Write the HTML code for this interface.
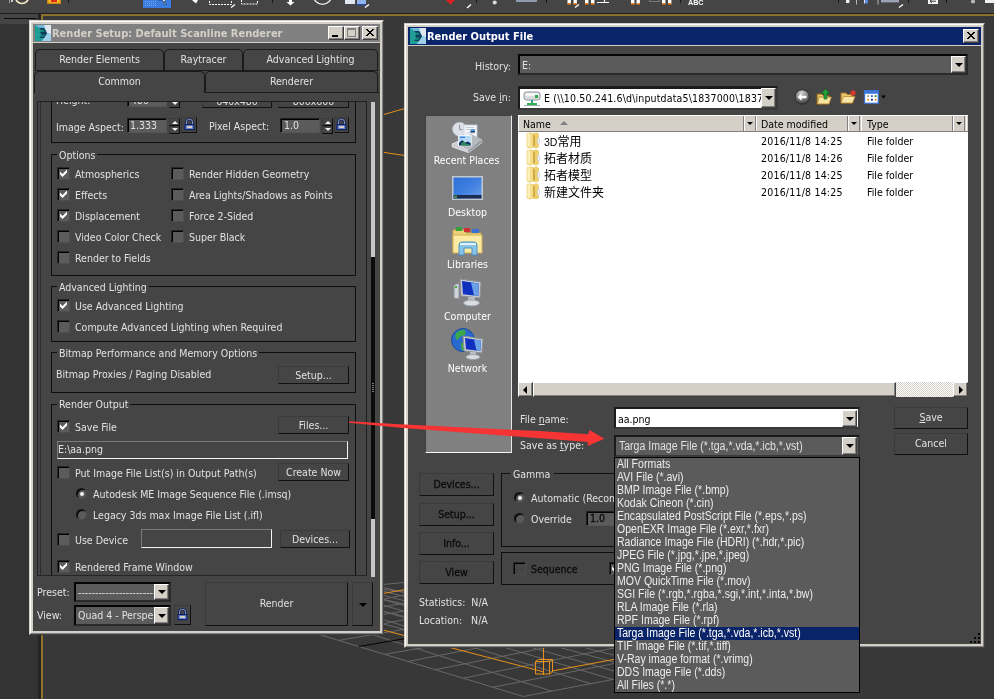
<!DOCTYPE html>
<html lang="en">
<head>
<meta charset="utf-8">
<title>Render Output File</title>
<style>
html,body{margin:0;padding:0;}
body{width:994px;height:699px;overflow:hidden;background:#383838;position:relative;
 font-family:"DejaVu Sans Condensed","Liberation Sans",sans-serif;font-size:10.5px;line-height:13px;color:#e1e1e1;}
.a{position:absolute;box-sizing:border-box;}
.t{position:absolute;white-space:nowrap;line-height:13px;height:13px;}
.dlg{position:absolute;box-sizing:border-box;background:#454545;}
/* classic window frame */
.frame{position:absolute;box-sizing:border-box;border:1px solid;border-color:#d4d0c8 #404040 #404040 #d4d0c8;}
.frame2{position:absolute;box-sizing:border-box;border:1px solid;border-color:#ffffff #808080 #808080 #ffffff;}
.frame3{position:absolute;box-sizing:border-box;border:2px solid #d4d0c8;}
.title{position:absolute;box-sizing:border-box;height:18px;font-weight:bold;font-size:11px;line-height:18px;white-space:nowrap;}
.tb{position:absolute;box-sizing:border-box;width:16px;height:14px;background:#d4d0c8;border:1px solid;border-color:#fff #404040 #404040 #fff;box-shadow:inset -1px -1px 0 #808080;}
.grp{position:absolute;box-sizing:border-box;border:1px solid #0e0e0e;}
.gl{position:absolute;white-space:nowrap;background:#454545;padding:0 2px 0 2px;line-height:13px;height:13px;}
.cb{position:absolute;box-sizing:border-box;width:13px;height:13px;background:#5b5b5b;border:1px solid;border-color:#262626 #4e4e4e #4e4e4e #262626;box-shadow:inset 1px 1px 0 #000;}
.cb svg{position:absolute;left:2px;top:1px;}
.rb{position:absolute;box-sizing:border-box;width:11px;height:11px;border-radius:50%;background:#5b5b5b;border:1px solid;border-color:#141414 #4c4c4c #4c4c4c #141414;box-shadow:inset 1px 1px 0 #000;}
.rb.on::after{content:"";position:absolute;left:3px;top:3px;width:4px;height:4px;border-radius:50%;background:#f0f0f0;}
.btn{position:absolute;box-sizing:border-box;border:1px solid;border-color:#3a3a3a #111 #111 #3a3a3a;background:#454545;text-align:center;white-space:nowrap;}
.fld{position:absolute;box-sizing:border-box;border:1px solid;border-color:#7a7a7a #f4f4f4 #f4f4f4 #7a7a7a;background:#454545;}
.sunk{position:absolute;box-sizing:border-box;border:1px solid;border-color:#1e1e1e #555 #555 #1e1e1e;box-shadow:inset 1px 1px 0 #000;}
.dd{position:absolute;box-sizing:border-box;width:15px;background:#d4d0c8;border:1px solid;border-color:#fff #404040 #404040 #fff;box-shadow:inset -1px -1px 0 #808080;}
.dd::after{content:"";position:absolute;left:3px;top:50%;margin-top:-2px;border:4px solid transparent;border-top-color:#000;border-bottom-width:0;}
.tab{position:absolute;box-sizing:border-box;border:1px solid #1b1b1b;border-bottom:none;border-radius:5px 5px 0 0;background:#454545;text-align:center;white-space:nowrap;}
.ms{font-family:"Liberation Sans",sans-serif;font-size:12.5px;transform:scaleX(.842);transform-origin:0 50%;}
.li{height:13px;line-height:13px;white-space:nowrap;padding-left:2px;color:#ececec;}
.li .ms{display:inline-block;}
.li.sel{background:#0a246a;color:#fff;}
.cj{font-family:"Liberation Sans","Noto Sans CJK SC",sans-serif;font-size:12px;}
.btn.dis,.dk{color:#0c0c0c;-webkit-text-stroke:.3px #0c0c0c;}
.sp{position:absolute;box-sizing:border-box;width:11px;height:8px;border:1px solid;border-color:#3a3a3a #0a0a0a #0a0a0a #3a3a3a;}
.sp i{position:absolute;left:2px;top:2px;border:3px solid transparent;width:0;height:0;}
.sp i.u{border-bottom-color:#f0f0f0;border-top-width:0;}
.sp i.d{border-top-color:#f0f0f0;border-bottom-width:0;top:1px;}
.dd.hl::after{left:4px;margin-top:-4px;border:4px solid transparent;border-right-color:#000;border-left-width:0;}
.dd.hr::after{left:5px;margin-top:-4px;border:4px solid transparent;border-left-color:#000;border-right-width:0;}
.cmb{position:absolute;box-sizing:border-box;border:2px solid;border-color:#050505 #2a2a2a #2a2a2a #050505;background:#5b5b5b;}
</style>
</head>
<body>
<div id="root" style="position:absolute;left:0;top:0;width:994px;height:699px;will-change:transform;">
<!-- ===== BACKGROUND: toolbar + viewport ===== -->
<div id="bg" class="a" style="left:0;top:0;width:994px;height:699px;">
 <div class="a" style="left:0;top:0;width:994px;height:13px;background:#454545;"></div>
 <div class="a" style="left:0;top:13px;width:994px;height:1px;background:#1e1e1e;"></div>
 <div class="a" style="left:0;top:14px;width:39px;height:10px;background:#454545;"></div>
 <div class="a" style="left:4px;top:18px;width:33px;height:1px;background:#0c0c0c;"></div>
 <div class="a" style="left:0;top:24px;width:39px;height:675px;background:#333333;"></div>
 <div class="a" style="left:38px;top:14px;width:3px;height:685px;background:repeating-conic-gradient(#141414 0 25%,#353535 0 50%) 0 0/2px 2px;"></div>
 <div class="a" style="left:41px;top:14px;width:953px;height:685px;border-top:2px solid #8c722b;border-left:2px solid #8c722b;"></div>
</div>
<svg id="toolbar" class="a" style="left:0;top:0" width="994" height="13" viewBox="0 0 994 13">
<rect x="9" y="0" width="1" height="3" fill="#9a9a9a"/><rect x="11" y="0" width="2" height="2" fill="#c8c8c8"/>
<circle cx="22" cy="-3" r="6.5" fill="none" stroke="#f4ecc8" stroke-width="1.6"/>
<rect x="48" y="-3" width="12" height="6" fill="#f0c030" stroke="#f09a10" stroke-width="1.6"/><rect x="51" y="0" width="6" height="2" fill="#e02a20"/>
<rect x="68" y="0" width="1" height="3" fill="#1a1a1a"/>
<rect x="143" y="0" width="28" height="8" fill="#3a7be0"/><path d="M145 1h1v1h-1zM147 1h1v1h-1zM149 1h1v1h-1zM151 1h1v1h-1zM153 1h1v1h-1zM155 1h1v1h-1zM145 3h1v1h-1zM147 3h1v1h-1zM149 3h1v1h-1zM151 3h1v1h-1zM153 3h1v1h-1zM155 3h1v1h-1zM145 5h1v1h-1zM147 5h1v1h-1zM149 5h1v1h-1zM151 5h1v1h-1zM153 5h1v1h-1zM155 5h1v1h-1z" fill="#7aa8f0"/>
<path d="M158 0L162 0L166.5 4L163.5 4L165.5 0" fill="#fff" stroke="#123" stroke-width=".6"/>
<path d="M192 0L196 3.5L198 0Z" fill="#fff"/>
<rect x="209.5" y="-4" width="22" height="8.5" fill="none" stroke="#fff" stroke-width="1" stroke-dasharray="2 1"/>
<path d="M231 7.5L235 4.5" stroke="#fff" stroke-width="1.4"/>
<rect x="241.5" y="-4" width="16" height="8" fill="none" stroke="#fff" stroke-width="1" stroke-dasharray="2 1"/>
<rect x="272" y="0" width="1" height="3" fill="#1a1a1a"/>
<path d="M289 0H292V2H294.5L290.5 5.5L286.5 2H289Z" fill="#fff"/>
<circle cx="322.5" cy="-5" r="9.3" fill="none" stroke="#f0f0f0" stroke-width="1.3"/>
<rect x="345" y="0" width="10" height="4" fill="#e2e8f2"/><rect x="357" y="0" width="9" height="4" fill="#8fb4ec"/><rect x="357" y="4" width="9" height="1.4" fill="#2a4aa0"/>
<path d="M365 7.5L369 4.5" stroke="#fff" stroke-width="1.4"/>
<path d="M446 0H455L450.5 4.5Z" fill="#e02020"/>
<path d="M467 8L471 4.5" stroke="#fff" stroke-width="1.4"/>
<rect x="476" y="0" width="1" height="3" fill="#1a1a1a"/>
<circle cx="494.7" cy="2.5" r="2.1" fill="#d8d8d8"/>
<rect x="516" y="0" width="21" height="2" fill="#8e9aae"/>
<rect x="546" y="0" width="1" height="3" fill="#1a1a1a"/>
<g fill="#fff"><rect x="567.5" y="0" width="3.4" height="4"/><rect x="573.5" y="0" width="3.4" height="4"/><rect x="585" y="0" width="3.4" height="4"/><rect x="591" y="0" width="3.4" height="4"/><rect x="631" y="0" width="3.4" height="4"/><rect x="636.5" y="0" width="3.4" height="4"/><rect x="662" y="0" width="3.4" height="4"/><rect x="668" y="0" width="3.4" height="4"/></g>
<g fill="#f08020"><rect x="567.5" y="3" width="3.4" height="1.6"/><rect x="573.5" y="3" width="3.4" height="1.6"/><rect x="585" y="3" width="3.4" height="1.6"/><rect x="591" y="3" width="3.4" height="1.6"/><rect x="631" y="3" width="3.4" height="1.6"/><rect x="636.5" y="3" width="3.4" height="1.6"/><rect x="662" y="3" width="3.4" height="1.6"/><rect x="668" y="3" width="3.4" height="1.6"/></g>
<path d="M575 7.5L579 4.5" stroke="#fff" stroke-width="1.4"/>
<path d="M597 2.5H609M604.5 0V2.5" stroke="#fff" stroke-width="1.2"/>
<rect x="649.5" y="-3" width="10" height="4.5" fill="none" stroke="#7a7a7a"/>
<rect x="680" y="0" width="1" height="3" fill="#1a1a1a"/>
<text x="688" y="5.2" font-family="Liberation Sans, sans-serif" font-size="7" font-weight="bold" fill="#fff" textLength="15.5" lengthAdjust="spacingAndGlyphs">ABC</text>
<rect x="838" y="0" width="1" height="3" fill="#1a1a1a"/>
<rect x="846" y="0" width="3.4" height="3" fill="#f0f0f0"/>
<rect x="856" y="0" width="1" height="4.5" fill="#b8b8b8"/>
<rect x="864" y="0" width="4" height="3.4" fill="#5a8be0"/><rect x="864" y="0" width="1" height="3.4" fill="#dfe8fa"/>
<rect x="877.5" y="0" width="1" height="4.5" fill="#b8b8b8"/>
<rect x="881" y="0" width="18" height="2.4" fill="#9aa4b6"/>
<path d="M899 7.5L903 4.5" stroke="#fff" stroke-width="1.4"/>
<rect x="908" y="0" width="1" height="3" fill="#1a1a1a"/>
<rect x="928" y="-2" width="10" height="6" fill="#f4f4f4"/><path d="M930 1.2H936M930 1.2L932 -.5M930 1.2L932 3" stroke="#222" stroke-width=".9" fill="none"/>
<rect x="946" y="0" width="1" height="3" fill="#1a1a1a"/>
<rect x="971" y="0" width="4" height="3.2" rx="1" fill="#b4b4b4"/>
<rect x="985" y="0" width="9" height="3" fill="#f0f0f0"/>
</svg>
<!--VP_START-->
<svg id="viewport" class="a" style="left:0;top:0" width="994" height="699" viewBox="0 0 994 699" stroke-width="1" shape-rendering="auto">
<line x1="209.4" y1="601.1" x2="523.3" y2="696.5" stroke="#686868"/>
<line x1="252.7" y1="597.0" x2="551.7" y2="691.1" stroke="#686868"/>
<line x1="296.7" y1="592.8" x2="590.8" y2="683.7" stroke="#686868"/>
<line x1="314.9" y1="591.1" x2="612.8" y2="679.5" stroke="#686868"/>
<line x1="328.7" y1="589.8" x2="631.3" y2="676.0" stroke="#686868"/>
<line x1="341.7" y1="588.5" x2="651.5" y2="672.2" stroke="#686868"/>
<line x1="353.1" y1="587.4" x2="667.4" y2="669.1" stroke="#686868"/>
<line x1="364.0" y1="586.4" x2="683.1" y2="666.2" stroke="#686868"/>
<line x1="374.5" y1="585.4" x2="698.7" y2="663.2" stroke="#686868"/>
<line x1="362.2" y1="586.6" x2="404.0" y2="592.0" stroke="#686868"/>
<line x1="337.8" y1="588.9" x2="404.0" y2="604.1" stroke="#686868"/>
<line x1="303.4" y1="592.2" x2="404.0" y2="616.3" stroke="#686868"/>
<line x1="274.0" y1="595.0" x2="404.0" y2="629.4" stroke="#686868"/>
<line x1="209.3" y1="601.0" x2="900.0" y2="535.4" stroke="#686868"/>
<line x1="276.9" y1="621.6" x2="900.0" y2="490.7" stroke="#686868"/>
<line x1="283.9" y1="623.7" x2="900.0" y2="519.0" stroke="#686868"/>
<line x1="300.1" y1="628.7" x2="900.0" y2="526.7" stroke="#686868"/>
<line x1="322.0" y1="635.3" x2="900.0" y2="525.5" stroke="#686868"/>
<line x1="338.7" y1="640.4" x2="900.0" y2="545.0" stroke="#686868"/>
<line x1="384.5" y1="654.3" x2="900.0" y2="566.7" stroke="#686868"/>
<line x1="408.0" y1="661.5" x2="900.0" y2="565.5" stroke="#686868"/>
<line x1="435.3" y1="669.7" x2="900.0" y2="576.8" stroke="#686868"/>
<line x1="463.1" y1="678.2" x2="900.0" y2="590.8" stroke="#686868"/>
<line x1="492.8" y1="687.2" x2="900.0" y2="607.8" stroke="#686868"/>
<line x1="523.2" y1="696.5" x2="900.0" y2="624.9" stroke="#686868"/>
<line x1="358.8" y1="646.5" x2="900.0" y2="554.5" stroke="#000"/>
<path d="M383 630L544 672M552 671L640 654.5M300 608L420 587M383.8 114.5L404 108.7M383.8 152.4L404 155.4" stroke="#e8901c" fill="none"/>
<path d="M535.5 661.5H549.5V674H535.5ZM538.5 659.5H552.5V672M535.5 661.5L538.5 659.5M549.5 661.5L552.5 659.5M549.5 674L552.5 672M543.5 647V675" stroke="#e8901c" fill="none"/>
</svg>
<div class="a" style="left:41px;top:635px;width:2px;height:64px;background:#8c722b;"></div>
<!--VP_END-->
<!--LEFTDLG_START-->
<!-- ===== LEFT DIALOG: Render Setup ===== -->
<div id="renderSetup" class="dlg" style="left:29px;top:20px;width:355px;height:615px;">
 <div class="frame" style="left:0;top:0;width:355px;height:615px;"></div>
 <div class="frame2" style="left:1px;top:1px;width:353px;height:613px;"></div>
 <div class="frame3" style="left:2px;top:2px;width:351px;height:611px;"></div>
</div>
<div class="title" style="left:33px;top:24px;width:347px;background:#808080;color:#d4d0c8;">
 <svg class="a" style="left:2px;top:1px" width="16" height="16" viewBox="0 0 16 16"><rect width="16" height="16" fill="#6fb6d8"/><polygon points="0,0 0,16 7,16 12,9" fill="#1f9e96"/><polygon points="9,0 16,0 16,9 12,8" fill="#dfe8ee"/><polygon points="7,16 16,16 16,9 12,9" fill="#9fd0ea"/><path d="M4 3 L9 3 L12 8 L9 13 L4 13 L7 10 L5 8 L7 6 Z" fill="#123a5a"/><path d="M5 4.5 L8.5 4.5 L10 7 L6 7Z M6 9.5 L10 9.5 L8.5 12 L5.5 12Z" fill="#0f7f7a"/></svg>
 <span class="a" style="left:19px;top:1px;">Render Setup: Default Scanline Renderer</span>
</div>
<div class="a" style="left:33px;top:42px;width:347px;height:1px;background:#d4d0c8;"></div>
<div class="tb" style="left:328px;top:26px;"><div class="a" style="left:3px;top:8px;width:6px;height:2px;background:#000"></div></div>
<div class="tb" style="left:344px;top:26px;"><div class="a" style="left:2px;top:1px;width:9px;height:9px;border:1px solid #808080;border-top-width:2px;"></div></div>
<div class="tb" style="left:362px;top:26px;"><svg class="a" style="left:3px;top:2px" width="8" height="7" viewBox="0 0 8 7"><path d="M0 0L7 7M1 0L8 7M7 0L0 7M8 0L1 7" stroke="#000" stroke-width="1" fill="none" transform="translate(0,-.0)"/></svg></div>

<!-- tabs -->
<div class="tab" style="left:35px;top:49px;width:129px;height:22px;line-height:18px;">Render Elements</div>
<div class="tab" style="left:164px;top:49px;width:79px;height:22px;line-height:18px;">Raytracer</div>
<div class="tab" style="left:243px;top:49px;width:135px;height:22px;line-height:18px;">Advanced Lighting</div>
<div class="a" style="left:35px;top:70px;width:343px;height:1px;background:#1b1b1b;"></div>
<div class="tab" style="left:205px;top:71px;width:173px;height:22px;line-height:18px;">Renderer</div>
<div class="a" style="left:35px;top:92px;width:344px;height:1px;background:#1b1b1b;"></div>
<div class="tab" style="left:34px;top:71px;width:171px;height:22px;line-height:18px;border-right-color:#1b1b1b;">Common</div>

<!-- rollout content -->
<div class="a" style="left:37px;top:101px;width:330px;height:475px;overflow:hidden;border-top:1px solid #1f1f1f;border-left:1px solid #222;border-right:1px solid #1f1f1f;border-bottom:1px solid #262626;">
 <div class="a" style="left:-38px;top:-102px;width:400px;height:700px;">
  <div class="a" style="left:40px;top:100px;width:1px;height:480px;background:#2c2c2c;"></div>
  <!-- output size group (clipped) -->
  <div class="grp" style="left:51px;top:40px;width:305px;height:103px;"></div>
  <div class="t" style="left:56px;top:94px;">Height:</div>
  <div class="sunk" style="left:127px;top:92px;width:40px;height:15px;background:#5b5b5b;"></div>
  <div class="t" style="left:131px;top:94px;">480</div>
  <div class="sp" style="left:169px;top:92px;"><i class="u"></i></div><div class="sp" style="left:169px;top:100px;"><i class="d"></i></div>
  <div class="btn" style="left:202px;top:90px;width:70px;height:18px;line-height:20px;">640x480</div>
  <div class="btn" style="left:278px;top:90px;width:71px;height:18px;line-height:20px;">800x600</div>
  <div class="t" style="left:56px;top:121px;">Image Aspect:</div>
  <div class="sunk" style="left:127px;top:118px;width:40px;height:15px;background:#5b5b5b;"></div>
  <div class="t" style="left:130px;top:119px;">1.333</div>
  <div class="sp" style="left:169px;top:118px;"><i class="u"></i></div><div class="sp" style="left:169px;top:126px;"><i class="d"></i></div>
  <div class="btn lock" style="left:181px;top:117px;width:16px;height:16px;"><svg class="a" style="left:2px;top:0px" width="11" height="13" viewBox="0 0 11 13"><path d="M2.5 6V3.6Q2.5 1.6 4.5 1.6H6.5Q8.5 1.6 8.5 3.6V6" fill="none" stroke="#0c2266" stroke-width="2.4"/><path d="M2.5 6V3.6Q2.5 1.6 4.5 1.6H6.5Q8.5 1.6 8.5 3.6V6" fill="none" stroke="#b4b8c4" stroke-width=".8"/><rect x="1" y="6.6" width="9" height="5" fill="#6a82c8" stroke="#0c2266" stroke-width="1.2"/><rect x="3" y="8" width="5" height="2" fill="#cfcfc8"/></svg></div>
  <div class="t" style="left:209px;top:120px;">Pixel Aspect:</div>
  <div class="sunk" style="left:280px;top:118px;width:40px;height:15px;background:#5b5b5b;"></div>
  <div class="t" style="left:284px;top:119px;">1.0</div>
  <div class="sp" style="left:322px;top:118px;"><i class="u"></i></div><div class="sp" style="left:322px;top:126px;"><i class="d"></i></div>
  <div class="btn lock" style="left:334px;top:117px;width:15px;height:16px;"><svg class="a" style="left:1px;top:0px" width="11" height="13" viewBox="0 0 11 13"><path d="M2.5 6V3.6Q2.5 1.6 4.5 1.6H6.5Q8.5 1.6 8.5 3.6V6" fill="none" stroke="#0c2266" stroke-width="2.4"/><path d="M2.5 6V3.6Q2.5 1.6 4.5 1.6H6.5Q8.5 1.6 8.5 3.6V6" fill="none" stroke="#b4b8c4" stroke-width=".8"/><rect x="1" y="6.6" width="9" height="5" fill="#6a82c8" stroke="#0c2266" stroke-width="1.2"/><rect x="3" y="8" width="5" height="2" fill="#cfcfc8"/></svg></div>

  <!-- Options -->
  <div class="grp" style="left:51px;top:154px;width:305px;height:122px;"></div>
  <div class="gl" style="left:57px;top:149px;">Options</div>
  <div class="cb" style="left:57px;top:167px;"><svg width="7" height="8" viewBox="0 0 7 8"><path d="M0 2.5L2.5 5L7 .5V3.5L2.5 8L0 5.5Z" fill="#fff"/></svg></div>
  <div class="t" style="left:75px;top:168px;">Atmospherics</div>
  <div class="cb" style="left:57px;top:188px;"><svg width="7" height="8" viewBox="0 0 7 8"><path d="M0 2.5L2.5 5L7 .5V3.5L2.5 8L0 5.5Z" fill="#fff"/></svg></div>
  <div class="t" style="left:75px;top:189px;">Effects</div>
  <div class="cb" style="left:57px;top:209px;"><svg width="7" height="8" viewBox="0 0 7 8"><path d="M0 2.5L2.5 5L7 .5V3.5L2.5 8L0 5.5Z" fill="#fff"/></svg></div>
  <div class="t" style="left:75px;top:210px;">Displacement</div>
  <div class="cb" style="left:57px;top:230px;"></div>
  <div class="t" style="left:75px;top:231px;">Video Color Check</div>
  <div class="cb" style="left:57px;top:251px;"></div>
  <div class="t" style="left:75px;top:252px;">Render to Fields</div>
  <div class="cb" style="left:171px;top:167px;"></div>
  <div class="t" style="left:189px;top:168px;">Render Hidden Geometry</div>
  <div class="cb" style="left:171px;top:188px;"></div>
  <div class="t" style="left:189px;top:189px;">Area Lights/Shadows as Points</div>
  <div class="cb" style="left:171px;top:209px;"></div>
  <div class="t" style="left:189px;top:210px;">Force 2-Sided</div>
  <div class="cb" style="left:171px;top:230px;"></div>
  <div class="t" style="left:189px;top:231px;">Super Black</div>

  <!-- Advanced Lighting -->
  <div class="grp" style="left:51px;top:286px;width:305px;height:56px;"></div>
  <div class="gl" style="left:57px;top:281px;">Advanced Lighting</div>
  <div class="cb" style="left:57px;top:299px;"><svg width="7" height="8" viewBox="0 0 7 8"><path d="M0 2.5L2.5 5L7 .5V3.5L2.5 8L0 5.5Z" fill="#fff"/></svg></div>
  <div class="t" style="left:75px;top:300px;">Use Advanced Lighting</div>
  <div class="cb" style="left:57px;top:320px;"></div>
  <div class="t" style="left:75px;top:321px;">Compute Advanced Lighting when Required</div>

  <!-- Bitmap -->
  <div class="grp" style="left:51px;top:352px;width:305px;height:41px;"></div>
  <div class="gl" style="left:57px;top:347px;">Bitmap Performance and Memory Options</div>
  <div class="t" style="left:56px;top:368px;">Bitmap Proxies / Paging Disabled</div>
  <div class="btn" style="left:278px;top:366px;width:71px;height:18px;line-height:17px;">Setup...</div>

  <!-- Render Output -->
  <div class="grp" style="left:51px;top:404px;width:305px;height:220px;"></div>
  <div class="gl" style="left:57px;top:398px;">Render Output</div>
  <div class="cb" style="left:57px;top:420px;"><svg width="7" height="8" viewBox="0 0 7 8"><path d="M0 2.5L2.5 5L7 .5V3.5L2.5 8L0 5.5Z" fill="#fff"/></svg></div>
  <div class="t" style="left:75px;top:421px;">Save File</div>
  <div class="btn" style="left:278px;top:416px;width:71px;height:18px;line-height:17px;">Files...</div>
  <div class="fld" style="left:57px;top:441px;width:291px;height:18px;"></div>
  <div class="t" style="left:58px;top:443px;">E:\aa.png</div>
  <div class="cb" style="left:57px;top:466px;"></div>
  <div class="t" style="left:75px;top:467px;">Put Image File List(s) in Output Path(s)</div>
  <div class="btn" style="left:278px;top:463px;width:71px;height:18px;line-height:17px;">Create Now</div>
  <div class="rb on" style="left:76px;top:488px;"></div>
  <div class="t" style="left:93px;top:488px;">Autodesk ME Image Sequence File (.imsq)</div>
  <div class="rb" style="left:76px;top:509px;"></div>
  <div class="t" style="left:93px;top:509px;">Legacy 3ds max Image File List (.ifl)</div>
  <div class="cb" style="left:57px;top:533px;"></div>
  <div class="t" style="left:75px;top:534px;">Use Device</div>
  <div class="fld" style="left:141px;top:529px;width:131px;height:19px;"></div>
  <div class="btn" style="left:280px;top:530px;width:70px;height:18px;line-height:17px;">Devices...</div>
  <div class="cb" style="left:57px;top:560px;"><svg width="7" height="8" viewBox="0 0 7 8"><path d="M0 2.5L2.5 5L7 .5V3.5L2.5 8L0 5.5Z" fill="#fff"/></svg></div>
  <div class="t" style="left:75px;top:561px;">Rendered Frame Window</div>
 </div>
</div>
<!-- scrollbar -->
<div class="a" style="left:371px;top:102px;width:4px;height:155px;background:#c6c6c6;"></div>
<div class="a" style="left:371px;top:257px;width:4px;height:262px;background:#0c0c0c;"></div>
<div class="a" style="left:372px;top:383px;width:2px;height:9px;background:repeating-linear-gradient(#777 0 1px,#0c0c0c 1px 2px);"></div>
<div class="a" style="left:371px;top:519px;width:4px;height:58px;background:#c6c6c6;"></div>

<!-- bottom controls -->
<div class="t" style="left:37px;top:586px;">Preset:</div>
<div class="cmb" style="left:74px;top:582px;width:97px;height:20px;"></div>
<div class="t" style="left:78px;top:586px;width:76px;overflow:hidden;">----------------------------</div>
<div class="dd" style="left:154px;top:584px;height:16px;"></div>
<div class="t" style="left:37px;top:609px;">View:</div>
<div class="cmb" style="left:74px;top:605px;width:97px;height:21px;"></div>
<div class="t" style="left:78px;top:609px;width:76px;overflow:hidden;">Quad 4 - Perspective</div>
<div class="dd" style="left:154px;top:607px;height:17px;"></div>
<div class="btn" style="left:174px;top:605px;width:17px;height:20px;"><svg class="a" style="left:2px;top:2px" width="11" height="13" viewBox="0 0 11 13"><path d="M2.5 6V3.6Q2.5 1.6 4.5 1.6H6.5Q8.5 1.6 8.5 3.6V6" fill="none" stroke="#0c2266" stroke-width="2.4"/><path d="M2.5 6V3.6Q2.5 1.6 4.5 1.6H6.5Q8.5 1.6 8.5 3.6V6" fill="none" stroke="#b4b8c4" stroke-width=".8"/><rect x="1" y="6.6" width="9" height="5" fill="#6a82c8" stroke="#0c2266" stroke-width="1.2"/><rect x="3" y="8" width="5" height="2" fill="#cfcfc8"/></svg></div>
<div class="btn" style="left:205px;top:582px;width:143px;height:44px;line-height:40px;">Render</div>
<div class="btn" style="left:352px;top:582px;width:21px;height:44px;"><div class="a" style="left:6px;top:20px;border:4px solid transparent;border-top-color:#000;border-bottom-width:0;"></div></div>
<!--LEFTDLG_END-->
<!--RIGHTDLG_START-->
<!-- ===== RIGHT DIALOG: Render Output File ===== -->
<div id="outputFile" class="dlg" style="left:404px;top:23px;width:581px;height:625px;">
 <div class="frame" style="left:0;top:0;width:581px;height:625px;"></div>
 <div class="frame2" style="left:1px;top:1px;width:579px;height:623px;"></div>
 <div class="frame3" style="left:2px;top:2px;width:577px;height:621px;"></div>
</div>
<div class="title" style="left:408px;top:27px;width:573px;background:#0a246a;color:#fff;">
 <svg class="a" style="left:2px;top:1px" width="16" height="16" viewBox="0 0 16 16"><rect width="16" height="16" fill="#6fb6d8"/><polygon points="0,0 0,16 7,16 12,9" fill="#1f9e96"/><polygon points="9,0 16,0 16,9 12,8" fill="#dfe8ee"/><polygon points="7,16 16,16 16,9 12,9" fill="#9fd0ea"/><path d="M4 3 L9 3 L12 8 L9 13 L4 13 L7 10 L5 8 L7 6 Z" fill="#123a5a"/><path d="M5 4.5 L8.5 4.5 L10 7 L6 7Z M6 9.5 L10 9.5 L8.5 12 L5.5 12Z" fill="#0f7f7a"/></svg>
 <span class="a" style="left:19px;top:1px;">Render Output File</span>
</div>
<div class="a" style="left:408px;top:45px;width:573px;height:1px;background:#d4d0c8;"></div>
<div class="tb" style="left:963px;top:29px;"><svg class="a" style="left:3px;top:2px" width="8" height="7" viewBox="0 0 8 7"><path d="M0 0L7 7M1 0L8 7M7 0L0 7M8 0L1 7" stroke="#000" stroke-width="1" fill="none"/></svg></div>

<!-- History -->
<div class="t" style="left:440px;top:60px;width:71px;text-align:right;">History:</div>
<div class="cmb" style="left:518px;top:54px;width:450px;height:21px;"></div>
<div class="t" style="left:522px;top:59px;">E:</div>
<div class="dd" style="left:951px;top:56px;height:17px;"></div>

<!-- Save in -->
<div class="t" style="left:440px;top:91px;width:71px;text-align:right;">Save <u>i</u>n:</div>
<div class="a" style="left:518px;top:86px;width:260px;height:24px;background:#fff;border:2px solid #1a1a1a;border-top-width:3px;border-right-color:#3a3a3a;border-bottom-color:#3a3a3a;"></div>
<svg class="a" style="left:523px;top:91px" width="18" height="16" viewBox="0 0 18 16"><rect x="1" y="1" width="16" height="8" rx="2.5" fill="#d9dde0" stroke="#8a9096" stroke-width="1"/><rect x="2" y="2" width="14" height="3" rx="1.5" fill="#f4f6f7"/><rect x="12" y="4" width="3" height="3" fill="#2fa84a"/><rect x="8" y="9" width="2" height="3" fill="#2a9d8f"/><rect x="4" y="12" width="10" height="2" fill="#35b04a"/><rect x="1" y="14" width="16" height="1" fill="#9aa7b4"/></svg>
<div class="t" style="left:544px;top:92px;width:217px;overflow:hidden;color:#000;letter-spacing:.16px;">E (\\10.50.241.6\d\inputdata5\1837000\1837</div>
<div class="dd" style="left:761px;top:88px;height:20px;"></div>
<!-- toolbar icons -->
<svg class="a" style="left:794px;top:89px" width="17" height="17" viewBox="0 0 17 17"><defs><radialGradient id="gb" cx=".45" cy=".2" r=".85"><stop offset="0" stop-color="#d0d0d0"/><stop offset=".5" stop-color="#868686"/><stop offset="1" stop-color="#2c2c2c"/></radialGradient></defs><circle cx="8.2" cy="8" r="7.2" fill="url(#gb)" stroke="#2e2e2e" stroke-width="1"/><path d="M3.5 8L7.5 4.3V6.8H12.5V9.2H7.5V11.7Z" fill="#fff"/></svg>
<svg class="a" style="left:816px;top:88px" width="17" height="18" viewBox="0 0 17 18"><path d="M1 6H6L7.5 7.5H13V16H1Z" fill="#e9c86a" stroke="#8a5a1c" stroke-width="1"/><path d="M3 9H15.5L13 16H1Z" fill="#f6e3a0" stroke="#a67a2a" stroke-width=".8"/><path d="M9.5 1L13.5 5.5H11V11H8V5.5H5.5Z" fill="#22a43a" stroke="#0f6a22" stroke-width=".6"/></svg>
<svg class="a" style="left:840px;top:89px" width="17" height="16" viewBox="0 0 17 16"><path d="M1 4H6L7.5 5.5H12V14H1Z" fill="#e9c86a" stroke="#a6702a" stroke-width="1"/><path d="M3.5 7.5H15L12.5 14H1Z" fill="#f8e6a8" stroke="#b8862f" stroke-width=".8"/><path d="M13 1V7M10 4H16M11 2L15 6M15 2L11 6" stroke="#e23a2a" stroke-width="1.1"/></svg>
<svg class="a" style="left:863px;top:89px" width="24" height="16" viewBox="0 0 24 16"><g transform="translate(.6,.8) scale(.92,.9)"><rect x="1" y="1" width="15" height="14" fill="#fff" stroke="#3a6fd0" stroke-width="1.4"/><rect x="1" y="1" width="15" height="3.4" fill="#3a76dc"/><rect x="4" y="6" width="2" height="2" fill="#9aa0a8"/><rect x="8" y="6" width="2" height="2" fill="#2a62d0"/><rect x="12" y="6" width="2" height="2" fill="#1f8a2c"/><rect x="4" y="10" width="2" height="2" fill="#f08a1c"/><rect x="8" y="10" width="2" height="2" fill="#10209a"/><rect x="12" y="10" width="2" height="2" fill="#f08a1c"/></g><path d="M18 6.5H23L20.5 9.5Z" fill="#000"/></svg>

<!-- Places bar -->
<div id="places" class="a" style="left:425px;top:115px;width:87px;height:338px;background:#808080;border:1px solid;border-color:#404040 #e8e6e0 #f4f4f4 #404040;"></div>
<!-- recent places -->
<svg class="a" style="left:451px;top:122px" width="33" height="31" viewBox="0 0 33 31"><circle cx="8.6" cy="7.2" r="7" fill="#dde1e7" stroke="#b4bcc6" stroke-width=".8"/><path d="M8.6 2.6V7.6H11.4" stroke="#8a929c" stroke-width="1" fill="none"/><rect x="13" y="3" width="13" height="15.5" fill="#f3f5f9" stroke="#c4ccd6" stroke-width=".8"/><path d="M15 5.5H23M15 7.5H19M15 11H23" stroke="#b8c4d4" stroke-width=".8"/><rect x="19.5" y="7" width="4.5" height="3.4" fill="#5a9ee0"/><rect x="19.5" y="9.2" width="4.5" height="1.2" fill="#1c2c50"/><path d="M7 19.5L20 12L30 17L17 28.5L7 23Z" fill="#b4b9c0"/><path d="M1 22L7 19.5V23L17 28.5L30 17L31 20.5L17.5 30.6L1.5 25Z" fill="#c9cdd2" stroke="#eef0f2" stroke-width=".8"/><path d="M17.5 30.6L31 20.5L30 17L17 28.5Z" fill="#9ba1a8"/><rect x="7.6" y="13.4" width="12.6" height="10.4" fill="#b6daf5" stroke="#f4f8fc" stroke-width=".8"/><path d="M8 21L11 18L14 20.5L17 19.5L19.8 21.5V23.4H8Z" fill="#16305e"/><path d="M10 21.5L12.5 19.5L16 22L19 22.5V23.4H10Z" fill="#2f8a5a"/><rect x="9" y="14.6" width="5" height="1.4" fill="#3a7ee0"/></svg>
<div class="t" style="left:423px;top:154px;width:87px;text-align:center;color:#fff;">Recent Places</div>
<!-- desktop -->
<svg class="a" style="left:451px;top:175px" width="33" height="26" viewBox="0 0 33 26"><defs><linearGradient id="gd" x1="0" y1="0" x2="1" y2="1"><stop offset="0" stop-color="#2f6fd8"/><stop offset=".5" stop-color="#3f7fe0"/><stop offset="1" stop-color="#6a9cec"/></linearGradient></defs><rect x="1" y="1" width="31" height="24" fill="#c0c8d0"/><rect x="2.5" y="2.5" width="28" height="21" fill="url(#gd)"/><rect x="2.5" y="20" width="28" height="3.5" fill="#1c2c50"/><rect x="3" y="20.5" width="3" height="2.5" fill="#4a8a4a"/></svg>
<div class="t" style="left:424px;top:206px;width:87px;text-align:center;color:#fff;">Desktop</div>
<!-- libraries -->
<svg class="a" style="left:451px;top:225px" width="33" height="31" viewBox="0 0 33 31"><path d="M2 5H13L15 8H30V27H2Z" fill="#eed27a" stroke="#c9a84a"/><rect x="5" y="2" width="6" height="4" fill="#3aa040"/><rect x="13" y="3" width="6" height="4" fill="#d03030"/><rect x="21" y="4" width="7" height="4" fill="#3a70d0"/><path d="M2 10H31V28H2Z" fill="#fbeaa4" stroke="#d2b050"/><path d="M8 30V20Q8 17 11 17H23Q26 17 26 20V30H21V23H13V30Z" fill="#8ac4e8" stroke="#4a90c0"/><path d="M9 19H25" stroke="#dff0fa" stroke-width="2"/></svg>
<div class="t" style="left:424px;top:258px;width:87px;text-align:center;color:#fff;">Libraries</div>
<!-- computer -->
<svg class="a" style="left:451px;top:277px" width="33" height="30" viewBox="0 0 33 30"><path d="M3 8L8 6V22L3 21Z" fill="#d0d4d8" stroke="#8a9098"/><rect x="4" y="9" width="2" height="2" fill="#40b040"/><path d="M9 2L30 5L29 21L10 19Z" fill="#c8ccd0" stroke="#8a9098"/><path d="M11 4L28 6.5L27.3 19L12 17.3Z" fill="#1030c0"/><path d="M20 5.5L28 6.5L27.3 19L23 18.4Z" fill="#6aa0e8"/><path d="M17 20H24V24H17Z" fill="#b8bcc0"/><ellipse cx="20.5" cy="26" rx="8" ry="3" fill="#d8dce0" stroke="#9aa2aa"/></svg>
<div class="t" style="left:424px;top:310px;width:87px;text-align:center;color:#fff;">Computer</div>
<!-- network -->
<svg class="a" style="left:451px;top:327px" width="34" height="33" viewBox="0 0 34 33"><circle cx="12" cy="13" r="11.5" fill="#2a6ad0" stroke="#1a4a9a"/><path d="M5 6Q9 2 14 3Q16 7 12 9Q8 9 7 13Q3 12 5 6ZM10 16Q15 14 17 18Q16 23 12 24Q9 21 10 16Z" fill="#3aa84a"/><path d="M12 9L32 12L31 26L13 24Z" fill="#c8ccd0" stroke="#8a9098"/><path d="M14 11L30 13.5L29.3 24L15 22.3Z" fill="#1030c0"/><path d="M23 12.5L30 13.5L29.3 24L25.5 23.5Z" fill="#6aa0e8"/><path d="M19 25H25V28H19Z" fill="#b8bcc0"/><ellipse cx="22" cy="30" rx="7" ry="2.5" fill="#d8dce0" stroke="#9aa2aa"/></svg>
<div class="t" style="left:424px;top:362px;width:87px;text-align:center;color:#fff;">Network</div>

<!-- File list -->
<div id="filelist" class="a" style="left:518px;top:115px;width:450px;height:282px;background:#fff;color:#000;overflow:hidden;">
 <div class="a" style="left:0;top:0;width:450px;height:17px;background:#d4d0c8;border-top:1px solid #fff;border-left:1px solid #fff;border-bottom:1px solid #808080;"></div>
 <div class="t" style="left:5px;top:3px;">Name</div>
 <div class="a" style="left:42px;top:6px;border:4px solid transparent;border-bottom-color:#808080;border-top-width:0;"></div>
 <div class="a hd" style="left:226px;top:1px;width:12px;height:15px;border-left:1px solid #fff;border-right:1px solid #808080;box-shadow:-1px 0 0 #808080;"><div class="a" style="left:2px;top:6px;border:3px solid transparent;border-top-color:#000;border-bottom-width:0;"></div></div>
 <div class="a" style="left:238px;top:1px;width:1px;height:15px;background:#fff;"></div>
 <div class="t" style="left:243px;top:3px;">Date modified</div>
 <div class="a hd" style="left:330px;top:1px;width:12px;height:15px;border-left:1px solid #fff;border-right:1px solid #808080;box-shadow:-1px 0 0 #808080;"><div class="a" style="left:2px;top:6px;border:3px solid transparent;border-top-color:#000;border-bottom-width:0;"></div></div>
 <div class="a" style="left:343px;top:1px;width:1px;height:15px;background:#fff;"></div>
 <div class="t" style="left:349px;top:3px;">Type</div>
 <div class="a hd" style="left:435px;top:1px;width:12px;height:15px;border-left:1px solid #fff;border-right:1px solid #808080;box-shadow:-1px 0 0 #808080;"><div class="a" style="left:2px;top:6px;border:3px solid transparent;border-top-color:#000;border-bottom-width:0;"></div></div>
 <div class="a" style="left:448px;top:1px;width:1px;height:15px;background:#fff;"></div>
 <!-- rows -->
 <div class="row a" style="left:0;top:18px;width:450px;height:17px;">
  <svg class="a" style="left:8px;top:-1px" width="15" height="17" viewBox="0 0 15 17"><path d="M1 1.5L4.5 .8L7 1.8L10.5 .8L12.5 2V15L10 16L7 15L3.5 16L1 15Z" fill="#f0d375" stroke="#e2c25c" stroke-width=".6"/><path d="M1.3 1.8L4.5 1V15.3L1.3 14.6Z" fill="#fcf0b8"/><path d="M4.5 1L7 2V15L4.5 15.6Z" fill="#f4dc88"/><path d="M7 2L9 4V13.5L7 15Z" fill="#d3aa45"/><path d="M9 2.5L12.3 2.2V14.8L9 15.5Z" fill="#edcf6c"/><rect x="11.6" y="6" width="1.9" height="6" rx=".8" fill="#f2f4f8" stroke="#b9c4d6" stroke-width=".5"/></svg>
  <div class="t cj" style="left:26px;top:3px;"><span style="font-size:10.5px">3D</span>常用</div>
  <div class="t" style="left:243px;top:2px;letter-spacing:.2px;">2016/11/8 14:25</div>
  <div class="t" style="left:349px;top:2px;">File folder</div>
 </div>
 <div class="row a" style="left:0;top:35px;width:450px;height:17px;">
  <svg class="a" style="left:8px;top:-1px" width="15" height="17" viewBox="0 0 15 17"><path d="M1 1.5L4.5 .8L7 1.8L10.5 .8L12.5 2V15L10 16L7 15L3.5 16L1 15Z" fill="#f0d375" stroke="#e2c25c" stroke-width=".6"/><path d="M1.3 1.8L4.5 1V15.3L1.3 14.6Z" fill="#fcf0b8"/><path d="M4.5 1L7 2V15L4.5 15.6Z" fill="#f4dc88"/><path d="M7 2L9 4V13.5L7 15Z" fill="#d3aa45"/><path d="M9 2.5L12.3 2.2V14.8L9 15.5Z" fill="#edcf6c"/><rect x="11.6" y="6" width="1.9" height="6" rx=".8" fill="#f2f4f8" stroke="#b9c4d6" stroke-width=".5"/></svg>
  <div class="t cj" style="left:26px;top:3px;">拓者材质</div>
  <div class="t" style="left:243px;top:2px;letter-spacing:.2px;">2016/11/8 14:26</div>
  <div class="t" style="left:349px;top:2px;">File folder</div>
 </div>
 <div class="row a" style="left:0;top:52px;width:450px;height:17px;">
  <svg class="a" style="left:8px;top:-1px" width="15" height="17" viewBox="0 0 15 17"><path d="M1 1.5L4.5 .8L7 1.8L10.5 .8L12.5 2V15L10 16L7 15L3.5 16L1 15Z" fill="#f0d375" stroke="#e2c25c" stroke-width=".6"/><path d="M1.3 1.8L4.5 1V15.3L1.3 14.6Z" fill="#fcf0b8"/><path d="M4.5 1L7 2V15L4.5 15.6Z" fill="#f4dc88"/><path d="M7 2L9 4V13.5L7 15Z" fill="#d3aa45"/><path d="M9 2.5L12.3 2.2V14.8L9 15.5Z" fill="#edcf6c"/><rect x="11.6" y="6" width="1.9" height="6" rx=".8" fill="#f2f4f8" stroke="#b9c4d6" stroke-width=".5"/></svg>
  <div class="t cj" style="left:26px;top:3px;">拓者模型</div>
  <div class="t" style="left:243px;top:2px;letter-spacing:.2px;">2016/11/8 14:25</div>
  <div class="t" style="left:349px;top:2px;">File folder</div>
 </div>
 <div class="row a" style="left:0;top:69px;width:450px;height:17px;">
  <svg class="a" style="left:8px;top:-1px" width="15" height="17" viewBox="0 0 15 17"><path d="M1 1.5L4.5 .8L7 1.8L10.5 .8L12.5 2V15L10 16L7 15L3.5 16L1 15Z" fill="#f0d375" stroke="#e2c25c" stroke-width=".6"/><path d="M1.3 1.8L4.5 1V15.3L1.3 14.6Z" fill="#fcf0b8"/><path d="M4.5 1L7 2V15L4.5 15.6Z" fill="#f4dc88"/><path d="M7 2L9 4V13.5L7 15Z" fill="#d3aa45"/><path d="M9 2.5L12.3 2.2V14.8L9 15.5Z" fill="#edcf6c"/><rect x="11.6" y="6" width="1.9" height="6" rx=".8" fill="#f2f4f8" stroke="#b9c4d6" stroke-width=".5"/></svg>
  <div class="t cj" style="left:26px;top:3px;">新建文件夹</div>
  <div class="t" style="left:243px;top:2px;letter-spacing:.2px;">2016/11/8 14:25</div>
  <div class="t" style="left:349px;top:2px;">File folder</div>
 </div>
 <!-- horizontal scrollbar -->
 <div class="a" style="left:0;top:267px;width:450px;height:15px;background:repeating-conic-gradient(#fff 0 25%,#d4d0c8 0 50%) 0 0/2px 2px;"></div>
 <div class="dd hl" style="left:0;top:267px;height:15px;"></div>
 <div class="a" style="left:15px;top:267px;width:363px;height:15px;background:#d4d0c8;border:1px solid;border-color:#fff #404040 #404040 #fff;box-shadow:inset -1px -1px 0 #808080;"></div>
 <div class="dd hr" style="left:435px;top:267px;height:15px;"></div>
</div>

<!-- File name / type -->
<div class="t" style="left:520px;top:413px;">File <u>n</u>ame:</div>
<div class="a" style="left:614px;top:407px;width:246px;height:22px;background:#fff;border:2px solid #1a1a1a;border-right-color:#3a3a3a;border-bottom-color:#3a3a3a;"></div>
<div class="t" style="left:618px;top:413px;color:#000;">aa.png</div>
<div class="dd" style="left:842px;top:410px;height:17px;"></div>
<div class="t" style="left:520px;top:439px;">Save as <u>t</u>ype:</div>
<div class="a" style="left:614px;top:435px;width:246px;height:22px;background:#5b5b5b;border:2px solid #1a1a1a;border-right-color:#3a3a3a;border-bottom-color:#3a3a3a;"></div>
<div class="t ms" style="left:619px;top:439px;height:15px;line-height:15px;">Targa Image File (*.tga,*.vda,*.icb,*.vst)</div>
<div class="dd" style="left:842px;top:437px;height:18px;"></div>
<div class="btn" style="left:894px;top:407px;width:74px;height:22px;line-height:19px;"><u>S</u>ave</div>
<div class="btn" style="left:894px;top:433px;width:74px;height:22px;line-height:19px;">Cancel</div>

<!-- lower-left buttons -->
<div class="btn dis" style="left:419px;top:473px;width:75px;height:23px;line-height:21px;">Devices...</div>
<div class="btn dis" style="left:419px;top:503px;width:75px;height:23px;line-height:21px;">Setup...</div>
<div class="btn dis" style="left:419px;top:532px;width:75px;height:23px;line-height:21px;">Info...</div>
<div class="btn dis" style="left:419px;top:561px;width:75px;height:23px;line-height:21px;">View</div>
<div class="t" style="left:419px;top:596px;">Statistics:&nbsp; N/A</div>
<div class="t" style="left:419px;top:614px;">Location:&nbsp;&nbsp; N/A</div>

<!-- Gamma group -->
<div class="grp" style="left:501px;top:473px;width:200px;height:74px;"></div>
<div class="gl" style="left:510px;top:468px;padding:0 4px 0 3px;">Gamma</div>
<div class="rb on" style="left:514px;top:492px;"></div>
<div class="t" style="left:531px;top:492px;">Automatic (Recommended)</div>
<div class="rb" style="left:514px;top:513px;"></div>
<div class="t" style="left:531px;top:513px;">Override</div>
<div class="sunk" style="left:586px;top:511px;width:40px;height:15px;background:#5b5b5b;"></div>
<div class="t dk" style="left:590px;top:512px;">1.0</div>
<!-- Sequence group -->
<div class="grp" style="left:501px;top:552px;width:200px;height:33px;"></div>
<div class="cb" style="left:513px;top:562px;background:#454545;"></div>
<div class="t dk" style="left:531px;top:563px;">Sequence</div>
<div class="cb" style="left:609px;top:562px;"><svg width="7" height="8" viewBox="0 0 7 8"><path d="M0 2.5L2.5 5L7 .5V3.5L2.5 8L0 5.5Z" fill="#fff"/></svg></div>

<!-- resize grip -->
<svg class="a" style="left:970px;top:633px" width="10" height="10" viewBox="0 0 10 10"><path d="M8 0h2v2H8zM4 4h2v2H4zM8 4h2v2H8zM0 8h2v2H0zM4 8h2v2H4zM8 8h2v2H8z" fill="#050505"/></svg>

<!-- file type dropdown list -->
<div id="typelist" class="a" style="left:614px;top:457px;width:246px;height:236px;background:#5b5b5b;border:1px solid #000;overflow:hidden;">
 <div class="li"><span class="ms">All Formats</span></div>
 <div class="li"><span class="ms">AVI File (*.avi)</span></div>
 <div class="li"><span class="ms">BMP Image File (*.bmp)</span></div>
 <div class="li"><span class="ms">Kodak Cineon (*.cin)</span></div>
 <div class="li"><span class="ms">Encapsulated PostScript File (*.eps,*.ps)</span></div>
 <div class="li"><span class="ms">OpenEXR Image File (*.exr,*.fxr)</span></div>
 <div class="li"><span class="ms">Radiance Image File (HDRI) (*.hdr,*.pic)</span></div>
 <div class="li"><span class="ms">JPEG File (*.jpg,*.jpe,*.jpeg)</span></div>
 <div class="li"><span class="ms">PNG Image File (*.png)</span></div>
 <div class="li"><span class="ms">MOV QuickTime File (*.mov)</span></div>
 <div class="li"><span class="ms">SGI File (*.rgb,*.rgba,*.sgi,*.int,*.inta,*.bw)</span></div>
 <div class="li"><span class="ms">RLA Image File (*.rla)</span></div>
 <div class="li"><span class="ms">RPF Image File (*.rpf)</span></div>
 <div class="li sel"><span class="ms">Targa Image File (*.tga,*.vda,*.icb,*.vst)</span></div>
 <div class="li"><span class="ms">TIF Image File (*.tif,*.tiff)</span></div>
 <div class="li"><span class="ms">V-Ray image format (*.vrimg)</span></div>
 <div class="li"><span class="ms">DDS Image File (*.dds)</span></div>
 <div class="li"><span class="ms">All Files (*.*)</span></div>
</div>
<!--RIGHTDLG_END-->
<!--AR_START-->
<svg id="arrow" class="a" style="left:0;top:0" width="994" height="699" viewBox="0 0 994 699"><polygon points="349,421.3 400,424.3 540,431.1 588.3,434.3 589.5,429.9 604.4,438.7 587.5,446 588,442 540,438.3 400,427.8 349,422.8" fill="#f73434"/></svg>
<!--AR_END-->
</div>
</body>
</html>
